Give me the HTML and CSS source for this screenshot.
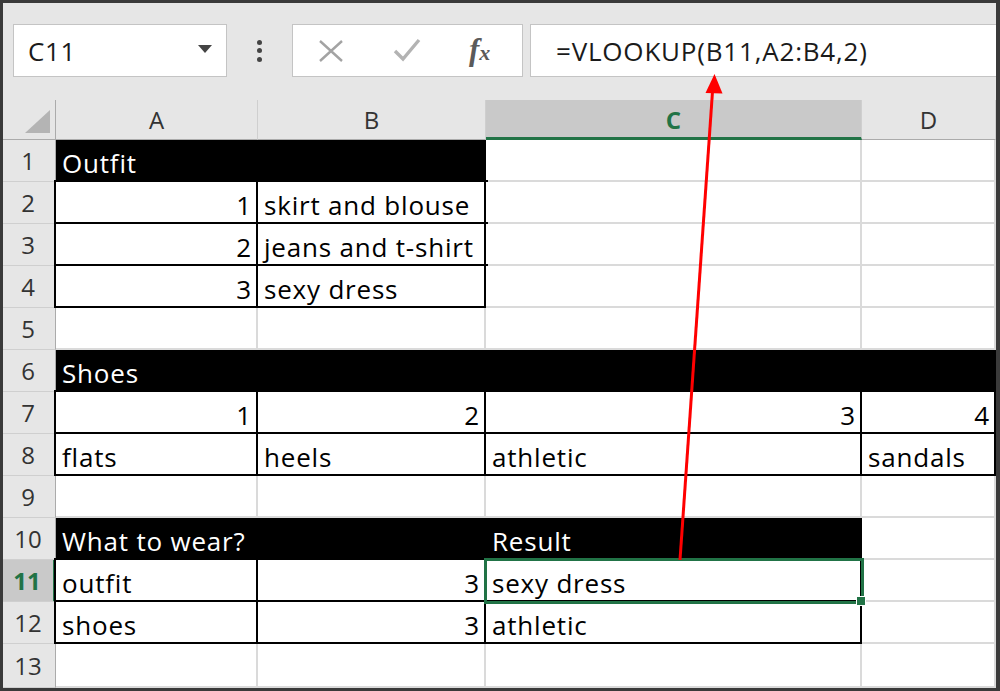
FILE: index.html
```html
<!DOCTYPE html>
<html>
<head>
<meta charset="utf-8">
<link rel="stylesheet" href="styles.css">
</head>
<body>
<div class="window">
  <div class="toolbar">
    <div class="namebox"><span class="nb-text">C11</span><span class="caret"></span></div>
    <div class="dots"><i></i><i></i><i></i></div>
    <div class="fxbox">
      <svg class="ico" width="30" height="30" viewBox="0 0 30 30"><path d="M4 5 L26 25 M26 5 L4 25" stroke="#a3a3a3" stroke-width="2.4" fill="none"/></svg>
      <svg class="ico ico-chk" width="30" height="30" viewBox="0 0 30 30"><path d="M3 15 L11 23 L27 4" stroke="#b3b3b3" stroke-width="3.4" fill="none"/></svg>
      <span class="fx"><span class="fx-f">f</span><span class="fx-x">x</span></span>
    </div>
    <div class="formula">=VLOOKUP(B11,A2:B4,2)</div>
  </div>
  <div class="sheet">
    <div class="corner"><span class="tri"></span></div>
    <div class="ch">A</div><div class="ch">B</div><div class="ch ch-sel">C</div><div class="ch">D</div>

    <div class="rh">1</div>
    <div class="c hd">Outfit</div><div class="c hd"></div><div class="c"></div><div class="c"></div>

    <div class="rh">2</div>
    <div class="c bx num">1</div><div class="c bx">skirt and blouse</div><div class="c"></div><div class="c"></div>

    <div class="rh">3</div>
    <div class="c bx num">2</div><div class="c bx">jeans and t-shirt</div><div class="c"></div><div class="c"></div>

    <div class="rh">4</div>
    <div class="c bx num">3</div><div class="c bx">sexy dress</div><div class="c"></div><div class="c"></div>

    <div class="rh">5</div>
    <div class="c"></div><div class="c"></div><div class="c"></div><div class="c"></div>

    <div class="rh">6</div>
    <div class="c hd">Shoes</div><div class="c hd"></div><div class="c hd"></div><div class="c hd"></div>

    <div class="rh">7</div>
    <div class="c bx num">1</div><div class="c bx num">2</div><div class="c bx num">3</div><div class="c bx num">4</div>

    <div class="rh">8</div>
    <div class="c bx">flats</div><div class="c bx">heels</div><div class="c bx">athletic</div><div class="c bx">sandals</div>

    <div class="rh">9</div>
    <div class="c"></div><div class="c"></div><div class="c"></div><div class="c"></div>

    <div class="rh">10</div>
    <div class="c hd">What to wear?</div><div class="c hd"></div><div class="c hd">Result</div><div class="c"></div>

    <div class="rh rh-sel">11</div>
    <div class="c bx">outfit</div><div class="c bx num">3</div><div class="c bx sel">sexy dress<span class="handle"></span></div><div class="c"></div>

    <div class="rh">12</div>
    <div class="c bx">shoes</div><div class="c bx num">3</div><div class="c bx">athletic</div><div class="c"></div>

    <div class="rh">13</div>
    <div class="c"></div><div class="c"></div><div class="c"></div><div class="c"></div>
  </div>
  <svg class="arrow" width="1000" height="691" viewBox="0 0 1000 691">
    <line x1="680" y1="560" x2="712.6" y2="90" stroke="#ff0000" stroke-width="3"/>
    <polygon points="714.5,74 705.5,93 722.5,93.5" fill="#ff0000"/>
  </svg>
</div>
</body>
</html>
```
FILE: styles.css
```css
html, body {
  margin: 0;
  padding: 0;
  background: #3a3a3a;
}

.window {
  position: relative;
  width: 1000px;
  height: 691px;
  box-sizing: border-box;
  border-style: solid;
  border-color: #3a3a3a;
  border-width: 3px 4px 3px 3px;
  background: #e6e6e6;
  display: flex;
  flex-direction: column;
  font-family: "Open Sans", Lato, sans-serif;
  font-variant-ligatures: none;
  overflow: hidden;
}

.toolbar {
  height: 97px;
  flex: none;
  box-sizing: border-box;
  display: flex;
  align-items: flex-start;
  padding: 21px 0 0 10px;
  background: #e6e6e6;
}

.namebox {
  width: 214px;
  height: 53px;
  box-sizing: border-box;
  background: #fff;
  border: 1px solid #c4c4c4;
  display: flex;
  align-items: center;
  justify-content: space-between;
  padding: 0 14px 0 14px;
}

.nb-text {
  font-size: 26px;
  letter-spacing: 0.6px;
  color: #1a1a1a;
}

.caret {
  width: 0;
  height: 0;
  border-left: 7px solid transparent;
  border-right: 7px solid transparent;
  border-top: 8px solid #444;
  margin-top: -4px;
}

.dots {
  width: 65px;
  height: 53px;
  display: flex;
  flex-direction: column;
  align-items: center;
  justify-content: center;
  gap: 3.5px;
}

.dots i {
  display: block;
  width: 5px;
  height: 5px;
  border-radius: 50%;
  background: #444;
}

.fxbox {
  width: 231px;
  height: 53px;
  box-sizing: border-box;
  background: #fff;
  border: 1px solid #c4c4c4;
  display: flex;
  align-items: center;
  padding-left: 23px;
  gap: 45px;
}

.ico {
  display: block;
  flex: none;
}

.ico-chk {
  margin-left: 1px;
}

.fx {
  font-family: "Liberation Serif", "DejaVu Serif", serif;
  font-style: italic;
  color: #5a5a5a;
  font-weight: bold;
  margin-left: 2px;
  display: flex;
  align-items: baseline;
  margin-top: -2px;
}

.fx-f {
  font-size: 31px;
}

.fx-x {
  font-size: 22px;
  margin-left: 0px;
}

.formula {
  flex: 1;
  height: 53px;
  margin-left: 7px;
  box-sizing: border-box;
  background: #fff;
  border: 1px solid #c4c4c4;
  border-right: none;
  display: flex;
  align-items: center;
  padding-left: 25px;
  font-size: 26px;
  letter-spacing: 0.8px;
  color: #1a1a1a;
}

.sheet {
  flex: 1;
  display: grid;
  grid-template-columns: 53px 202px 228px 376px 1fr;
  grid-template-rows: 40px repeat(12, 42px) 1fr;
  background: #fff;
}

.corner {
  background: #e6e6e6;
  border-right: 1px solid #ababab;
  border-bottom: 1px solid #ababab;
  position: relative;
}

.tri {
  position: absolute;
  right: 5px;
  bottom: 6px;
  width: 0;
  height: 0;
  border-left: 25px solid transparent;
  border-bottom: 23px solid #b4b4b4;
}

.ch {
  background: #e6e6e6;
  border-right: 1px solid #cfcfcf;
  border-bottom: 1px solid #ababab;
  display: flex;
  align-items: center;
  justify-content: center;
  font-size: 24px;
  color: #333;
}

.ch-sel {
  background: #c9c9c9;
  color: #217346;
  font-weight: bold;
  border-bottom: 3px solid #217346;
  padding-top: 2px;
}

.rh {
  background: #e6e6e6;
  border-right: 1px solid #ababab;
  border-bottom: 1px solid #cfcfcf;
  display: flex;
  align-items: center;
  justify-content: center;
  font-size: 24px;
  color: #333;
  padding-right: 2px;
}

.rh-sel {
  background: #c9c9c9;
  color: #217346;
  font-weight: bold;
  border-right: 3px solid #217346;
}

.c {
  box-sizing: border-box;
  border-right: 2px solid #dadada;
  border-bottom: 2px solid #dadada;
  background: #fff;
  display: flex;
  align-items: flex-end;
  padding: 0 4px 4px 6px;
  font-size: 26px;
  letter-spacing: 0.8px;
  line-height: 1;
  color: #000;
  white-space: nowrap;
}

.hd {
  background: #000;
  color: #fff;
  border-right-color: #000;
  border-bottom-color: #000;
}

.bx {
  border-right-color: #000;
  border-bottom-color: #000;
  box-shadow: 0 0 0 2px #000;
}

.num {
  justify-content: flex-end;
}

.sel {
  position: relative;
  outline: 3px solid #217346;
  outline-offset: -1px;
}

.handle {
  position: absolute;
  right: -6px;
  bottom: -6px;
  width: 8px;
  height: 8px;
  background: #217346;
  border: 1px solid #fff;
}

.arrow {
  position: absolute;
  left: -3px;
  top: -3px;
  pointer-events: none;
}
```
